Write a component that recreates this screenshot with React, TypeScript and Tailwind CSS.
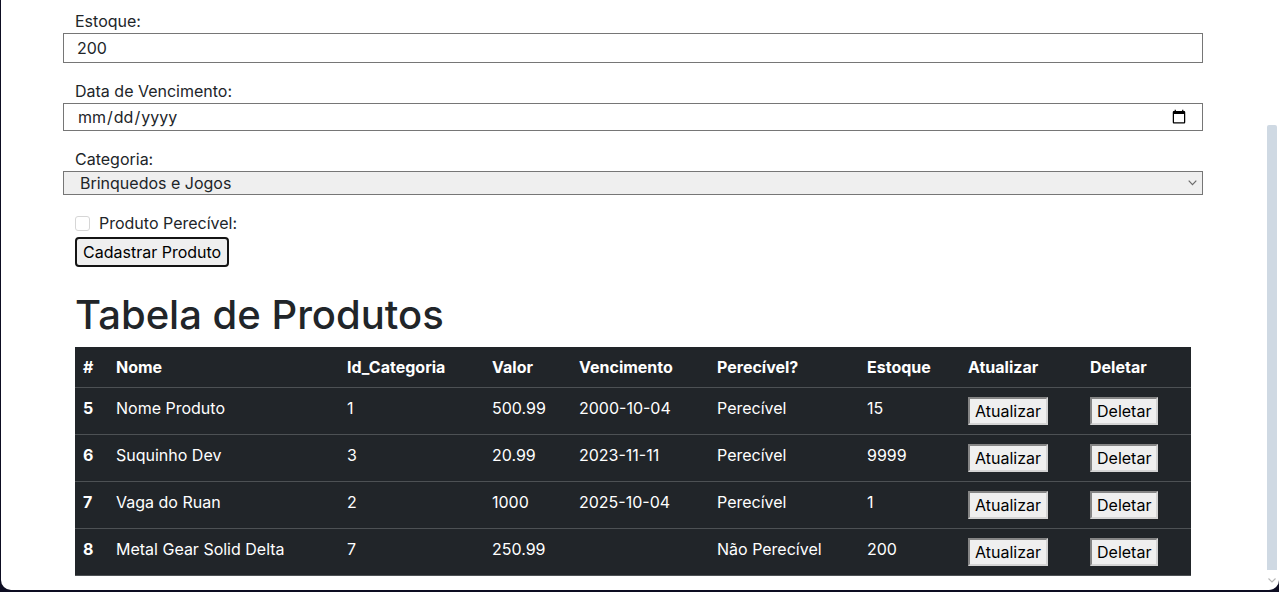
import React from 'react';

type Produto = {
  id: number;
  nome: string;
  categoria: number;
  valor: string;
  vencimento: string;
  perecivel: boolean;
  estoque: number;
};

const produtos: Produto[] = [
  { id: 5, nome: 'Nome Produto', categoria: 1, valor: '500.99', vencimento: '2000-10-04', perecivel: true, estoque: 15 },
  { id: 6, nome: 'Suquinho Dev', categoria: 3, valor: '20.99', vencimento: '2023-11-11', perecivel: true, estoque: 9999 },
  { id: 7, nome: 'Vaga do Ruan', categoria: 2, valor: '1000', vencimento: '2025-10-04', perecivel: true, estoque: 1 },
  { id: 8, nome: 'Metal Gear Solid Delta', categoria: 7, valor: '250.99', vencimento: '', perecivel: false, estoque: 200 },
];

const colunas = [
  { label: '#', w: 'w-[33px]' },
  { label: 'Nome', w: 'w-[231px]' },
  { label: 'Id_Categoria', w: 'w-[145px]' },
  { label: 'Valor', w: 'w-[87px]' },
  { label: 'Vencimento', w: 'w-[138px]' },
  { label: 'Perecível?', w: 'w-[150px]' },
  { label: 'Estoque', w: 'w-[101px]' },
  { label: 'Atualizar', w: 'w-[122px]' },
  { label: 'Deletar', w: 'w-[109px]' },
];

// classic outset-looking browser button
const btnTabela =
  'h-[28px] mt-[1px] px-[5px] bg-[#efefef] text-black text-[16px] leading-none border-2 border-t-[#858585] border-l-[#858585] border-r-[#d4d4d4] border-b-[#d4d4d4]';

const td = 'px-2 pt-2 pb-[7px] align-top border-b border-[#4d5154]';

export default function App() {
  return (
    <div
      className="h-screen w-full bg-[#0d0d22] pl-[1px] pb-[2px] flex overflow-hidden text-[#212529]"
      style={{ fontFamily: 'Inter, "Noto Sans", sans-serif' }}
    >
      <div className="flex-1 bg-white rounded-b-[10px] flex overflow-hidden">
        <main className="flex-1 min-w-0">
          <div className="w-[1140px] mx-auto pt-[9px]">
            {/* Formulário */}
            <div className="mb-4">
              <label className="block pl-3 text-[16px] leading-6">Estoque:</label>
              <input
                type="text"
                defaultValue="200"
                className="block w-full h-[30px] border border-[#767676] pl-[13px] text-[16px] outline-none"
              />
            </div>

            <div className="mb-4">
              <label className="block pl-3 text-[16px] leading-6">Data de Vencimento:</label>
              <input
                type="date"
                className="block w-full h-[28px] border border-[#767676] px-[13px] text-[16px] outline-none"
              />
            </div>

            <div className="mb-4">
              <label className="block pl-3 text-[16px] leading-6">Categoria:</label>
              <div className="relative">
                <select
                  defaultValue="7"
                  className="block w-full h-[24px] appearance-none border border-[#767676] bg-[#efefef] pl-[16px] text-[16px] leading-5 outline-none"
                >
                  <option value="7">Brinquedos e Jogos</option>
                </select>
                <svg
                  className="absolute right-[6px] top-[9px] pointer-events-none"
                  width="9"
                  height="6"
                  viewBox="0 0 9 6"
                >
                  <path d="M0.7 0.7 L4.5 4.6 L8.3 0.7" fill="none" stroke="#6b6b6b" strokeWidth="1.2" />
                </svg>
              </div>
            </div>

            <div className="flex items-center gap-[9px] pl-3 h-6">
              <input
                type="checkbox"
                className="appearance-none w-[15px] h-[15px] border border-[#d6d6d6] rounded-[3px] bg-white"
              />
              <span className="text-[16px] leading-6">Produto Perecível:</span>
            </div>

            <div className="pl-3 mt-[2px]">
              <button className="h-[30px] px-[6px] bg-[#efefef] text-black text-[16px] leading-none border-2 border-[#141414] rounded-[4px]">
                Cadastrar Produto
              </button>
            </div>

            {/* Tabela */}
            <div className="px-3">
              <h2 className="text-[40px] leading-[48px] font-medium mt-[24px] mb-2">Tabela de Produtos</h2>

              <table className="w-full table-fixed border-collapse bg-[#212529] text-white text-[16px] leading-6">
                <thead>
                  <tr>
                    {colunas.map((c) => (
                      <th key={c.label} className={`${c.w} text-left font-bold px-2 py-2 border-b border-[#4d5154]`}>
                        {c.label}
                      </th>
                    ))}
                  </tr>
                </thead>
                <tbody>
                  {produtos.map((p) => (
                    <tr key={p.id}>
                      <td className={`${td} font-bold`}>{p.id}</td>
                      <td className={td}>{p.nome}</td>
                      <td className={td}>{p.categoria}</td>
                      <td className={td}>{p.valor}</td>
                      <td className={td}>{p.vencimento}</td>
                      <td className={td}>{p.perecivel ? 'Perecível' : 'Não Perecível'}</td>
                      <td className={td}>{p.estoque}</td>
                      <td className={td}>
                        <div className="h-[31px]">
                          <button className={btnTabela}>Atualizar</button>
                        </div>
                      </td>
                      <td className={td}>
                        <div className="h-[31px]">
                          <button className={btnTabela}>Deletar</button>
                        </div>
                      </td>
                    </tr>
                  ))}
                </tbody>
              </table>
            </div>
          </div>
        </main>

        {/* barra de rolagem */}
        <div className="w-[14px] flex flex-col">
          <div className="h-[125px]" />
          <div className="flex-1 mx-[2px] bg-[#cfd9e3] rounded-t-[2px]" />
          <div className="h-[20px] flex items-center justify-center">
            <svg width="8" height="5" viewBox="0 0 8 5">
              <path d="M0.5 0.5 L4 4 L7.5 0.5" fill="none" stroke="#b8b8b8" strokeWidth="1.2" />
            </svg>
          </div>
        </div>
      </div>
    </div>
  );
}
